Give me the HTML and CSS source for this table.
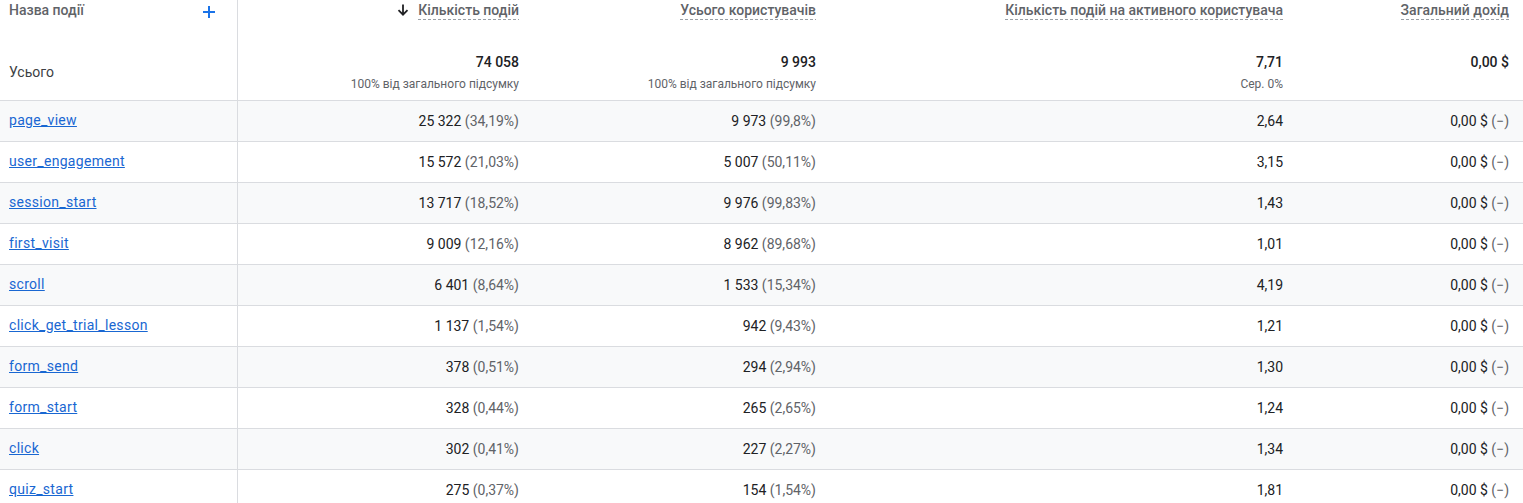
FILE: index.html
```html
<!DOCTYPE html>
<html lang="uk">
<head>
<meta charset="utf-8">
<title>Події</title>
<link rel="stylesheet" href="styles.css">
</head>
<body>
<table class="report">
  <colgroup>
    <col class="c-name">
    <col class="c-events">
    <col class="c-users">
    <col class="c-per">
    <col class="c-rev">
  </colgroup>
  <thead>
    <tr>
      <th class="name-head">
        <div class="title-row">
          <span class="title plain">Назва події</span>
          <svg class="plus" width="12" height="12" viewBox="0 0 12 12"><path d="M6 0V12M0 6H12" stroke="#1a73e8" stroke-width="2"/></svg>
        </div>
        <div class="total-label">Усього</div>
      </th>
      <th class="num-head">
        <div class="title-row right">
          <svg class="arrow" width="12" height="12" viewBox="0 0 12 12"><path d="M6 0.5V10.5M1.5 6.2L6 10.7L10.5 6.2" stroke="#202124" stroke-width="1.8" fill="none"/></svg>
          <span class="title">Кількість подій</span>
        </div>
        <div class="total">74 058</div>
        <div class="sub">100% від загального підсумку</div>
      </th>
      <th class="num-head">
        <div class="title-row right"><span class="title">Усього користувачів</span></div>
        <div class="total">9 993</div>
        <div class="sub">100% від загального підсумку</div>
      </th>
      <th class="num-head">
        <div class="title-row right"><span class="title">Кількість подій на активного користувача</span></div>
        <div class="total">7,71</div>
        <div class="sub">Сер. 0%</div>
      </th>
      <th class="num-head">
        <div class="title-row right"><span class="title">Загальний дохід</span></div>
        <div class="total">0,00 $</div>
        <div class="sub"></div>
      </th>
    </tr>
  </thead>
  <tbody>
    <tr class="shade"><td><a href="#">page_view</a></td><td>25 322 <span class="pct">(34,19%)</span></td><td>9 973 <span class="pct">(99,8%)</span></td><td>2,64</td><td>0,00 $ <span class="pct">(−)</span></td></tr>
    <tr><td><a href="#">user_engagement</a></td><td>15 572 <span class="pct">(21,03%)</span></td><td>5 007 <span class="pct">(50,11%)</span></td><td>3,15</td><td>0,00 $ <span class="pct">(−)</span></td></tr>
    <tr class="shade"><td><a href="#">session_start</a></td><td>13 717 <span class="pct">(18,52%)</span></td><td>9 976 <span class="pct">(99,83%)</span></td><td>1,43</td><td>0,00 $ <span class="pct">(−)</span></td></tr>
    <tr><td><a href="#">first_visit</a></td><td>9 009 <span class="pct">(12,16%)</span></td><td>8 962 <span class="pct">(89,68%)</span></td><td>1,01</td><td>0,00 $ <span class="pct">(−)</span></td></tr>
    <tr class="shade"><td><a href="#">scroll</a></td><td>6 401 <span class="pct">(8,64%)</span></td><td>1 533 <span class="pct">(15,34%)</span></td><td>4,19</td><td>0,00 $ <span class="pct">(−)</span></td></tr>
    <tr><td><a href="#">click_get_trial_lesson</a></td><td>1 137 <span class="pct">(1,54%)</span></td><td>942 <span class="pct">(9,43%)</span></td><td>1,21</td><td>0,00 $ <span class="pct">(−)</span></td></tr>
    <tr class="shade"><td><a href="#">form_send</a></td><td>378 <span class="pct">(0,51%)</span></td><td>294 <span class="pct">(2,94%)</span></td><td>1,30</td><td>0,00 $ <span class="pct">(−)</span></td></tr>
    <tr><td><a href="#">form_start</a></td><td>328 <span class="pct">(0,44%)</span></td><td>265 <span class="pct">(2,65%)</span></td><td>1,24</td><td>0,00 $ <span class="pct">(−)</span></td></tr>
    <tr class="shade"><td><a href="#">click</a></td><td>302 <span class="pct">(0,41%)</span></td><td>227 <span class="pct">(2,27%)</span></td><td>1,34</td><td>0,00 $ <span class="pct">(−)</span></td></tr>
    <tr><td><a href="#">quiz_start</a></td><td>275 <span class="pct">(0,37%)</span></td><td>154 <span class="pct">(1,54%)</span></td><td>1,81</td><td>0,00 $ <span class="pct">(−)</span></td></tr>
  </tbody>
</table>
</body>
</html>
```

FILE: styles.css
```css
html, body {
  margin: 0;
  padding: 0;
  background: #ffffff;
}

body {
  font-family: Roboto, "Noto Sans", "Liberation Sans", sans-serif;
  font-size: 14px;
  color: #202124;
  overflow: hidden;
}

.report {
  width: 1523px;
  table-layout: fixed;
  border-collapse: collapse;
}

.c-name { width: 237px; }
.c-events { width: 296px; }
.c-users { width: 297px; }
.c-per { width: 467px; }
.c-rev { width: 226px; }

th {
  vertical-align: top;
  padding: 0 14px 8px 0;
  font-weight: normal;
  text-align: right;
  border-bottom: 1px solid #dadce0;
}

th.name-head {
  text-align: left;
  padding: 0 22px 0 9px;
  border-right: 1px solid #dadce0;
}

.title-row {
  display: flex;
  align-items: center;
  height: 20px;
  line-height: 20px;
}

.title-row.right {
  justify-content: flex-end;
}

.name-head .title-row {
  justify-content: space-between;
}

.title {
  font-size: 14px;
  font-weight: 500;
  color: #5f6368;
  line-height: 18px;
  padding-bottom: 1px;
  background-image: linear-gradient(to right, #9aa0a6 60%, transparent 60%);
  background-size: 5px 1px;
  background-repeat: repeat-x;
  background-position: left bottom;
  white-space: nowrap;
}

.title.plain {
  background: none;
}

.plus {
  display: block;
  margin-top: 4px;
}

.arrow {
  display: block;
  margin-right: 9px;
}

.total-label {
  margin-top: 42px;
  line-height: 20px;
  font-size: 14px;
  color: #3c4043;
}

.total {
  margin-top: 32px;
  line-height: 20px;
  font-size: 14px;
  font-weight: 500;
  color: #202124;
}

.sub {
  margin-top: 4px;
  height: 16px;
  line-height: 16px;
  font-size: 12px;
  color: #5f6368;
}

td {
  height: 40px;
  padding: 0 14px 0 0;
  text-align: right;
  border-bottom: 1px solid #dadce0;
  white-space: nowrap;
  color: #202124;
}

.cell-text {
  display: block;
}

td:first-child {
  text-align: left;
  padding: 0 0 0 9px;
  border-right: 1px solid #dadce0;
}

tr.shade td {
  background: #f8f9fa;
}

td a {
  color: #1967d2;
  text-decoration: underline;
  letter-spacing: 0.3px;
  line-height: 18px;
  display: inline-block;
  margin-bottom: 2px;
}

.pct {
  color: #5f6368;
}
```
